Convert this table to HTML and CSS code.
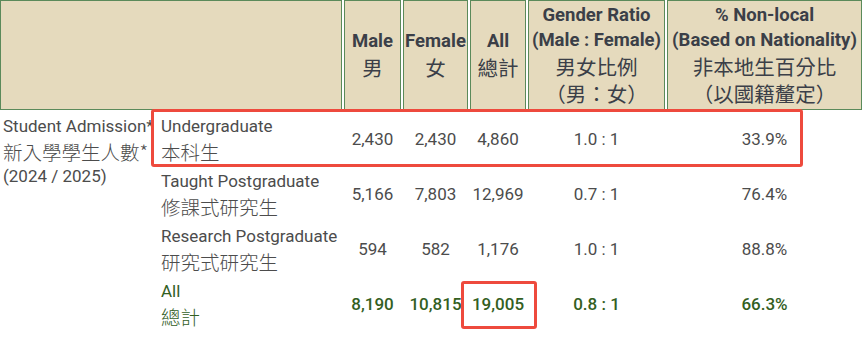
FILE: index.html
```html
<!DOCTYPE html>
<html lang="zh-Hant">
<head>
<meta charset="utf-8">
<title>Student Admission</title>
<link rel="stylesheet" href="styles.css">
</head>
<body>
<div class="wrap">
  <div class="stats">
    <div class="hd hd-blank"></div>
    <div class="hd"><div class="en">Male</div><div class="zh">男</div></div>
    <div class="hd"><div class="en">Female</div><div class="zh">女</div></div>
    <div class="hd"><div class="en">All</div><div class="zh">總計</div></div>
    <div class="hd"><div class="en">Gender Ratio</div><div class="en">(Male : Female)</div><div class="zh">男女比例</div><div class="zh">（男：女）</div></div>
    <div class="hd"><div class="en">% Non-local</div><div class="en">(Based on Nationality)</div><div class="zh">非本地生百分比</div><div class="zh">（以國籍釐定）</div></div>

    <div class="cat"><div>Student Admission*</div><div class="zh">新入學學生人數*</div><div>(2024 / 2025)</div></div>

    <div class="lvl"><div>Undergraduate</div><div class="zh">本科生</div></div>
    <div class="num">2,430</div><div class="num">2,430</div><div class="num">4,860</div><div class="num">1.0 : 1</div><div class="num">33.9%</div>

    <div class="lvl"><div>Taught Postgraduate</div><div class="zh">修課式研究生</div></div>
    <div class="num">5,166</div><div class="num">7,803</div><div class="num">12,969</div><div class="num">0.7 : 1</div><div class="num">76.4%</div>

    <div class="lvl"><div>Research Postgraduate</div><div class="zh">研究式研究生</div></div>
    <div class="num">594</div><div class="num">582</div><div class="num">1,176</div><div class="num">1.0 : 1</div><div class="num">88.8%</div>

    <div class="lvl total"><div>All</div><div class="zh">總計</div></div>
    <div class="num total">8,190</div><div class="num total">10,815</div><div class="num total">19,005</div><div class="num total">0.8 : 1</div><div class="num total">66.3%</div>
  </div>
  <div class="mark mark-ug"></div>
  <div class="mark mark-total"></div>
</div>
</body>
</html>
```
FILE: styles.css
```css
html, body {
  margin: 0;
  padding: 0;
  overflow: hidden;
  background: #ffffff;
}
body {
  font-family: Roboto, "Noto Sans CJK TC", sans-serif;
}
.wrap {
  position: relative;
  width: 863px;
  height: 338px;
}
.stats {
  display: grid;
  grid-template-columns: 151px 189px 57px 65px 56px 137px 195px;
  grid-template-rows: 110px repeat(4, 53px);
  gap: 2px;
  color: #4c4c4c;
  font-size: 17px;
  line-height: 25px;
}
.zh {
  font-family: "Noto Sans CJK TC", sans-serif;
}
.hd {
  box-sizing: border-box;
  background: #e5dabd;
  border: 1px solid #5b8a5a;
  display: flex;
  flex-direction: column;
  align-items: center;
  justify-content: center;
  text-align: center;
  color: #3b3f48;
  white-space: nowrap;
}
.hd-blank {
  grid-column: span 2;
}
.hd .en {
  font-weight: 700;
  font-size: 18.5px;
  line-height: 25px;
}
.hd .zh {
  font-weight: 400;
  font-size: 20.5px;
  line-height: 27px;
}
.cat {
  grid-row: 2 / span 4;
  grid-column: 1;
  padding: 2px 0 0 3px;
  white-space: nowrap;
}
.lvl {
  padding: 2px 0 1px 8px;
  white-space: nowrap;
}
.cat .zh,
.lvl .zh {
  font-size: 19.5px;
  font-weight: 300;
  line-height: 25px;
}
.num {
  display: flex;
  align-items: center;
  justify-content: center;
  white-space: nowrap;
  padding-top: 1px;
}
.total {
  color: #33601f;
}
.num.total {
  font-weight: 500;
}
.mark {
  position: absolute;
  border: 3px solid #ee4a3d;
  border-radius: 3px;
  box-sizing: border-box;
}
.mark-ug {
  left: 151px;
  top: 109px;
  width: 652px;
  height: 58px;
}
.mark-total {
  left: 461px;
  top: 281px;
  width: 76px;
  height: 48px;
}
```
